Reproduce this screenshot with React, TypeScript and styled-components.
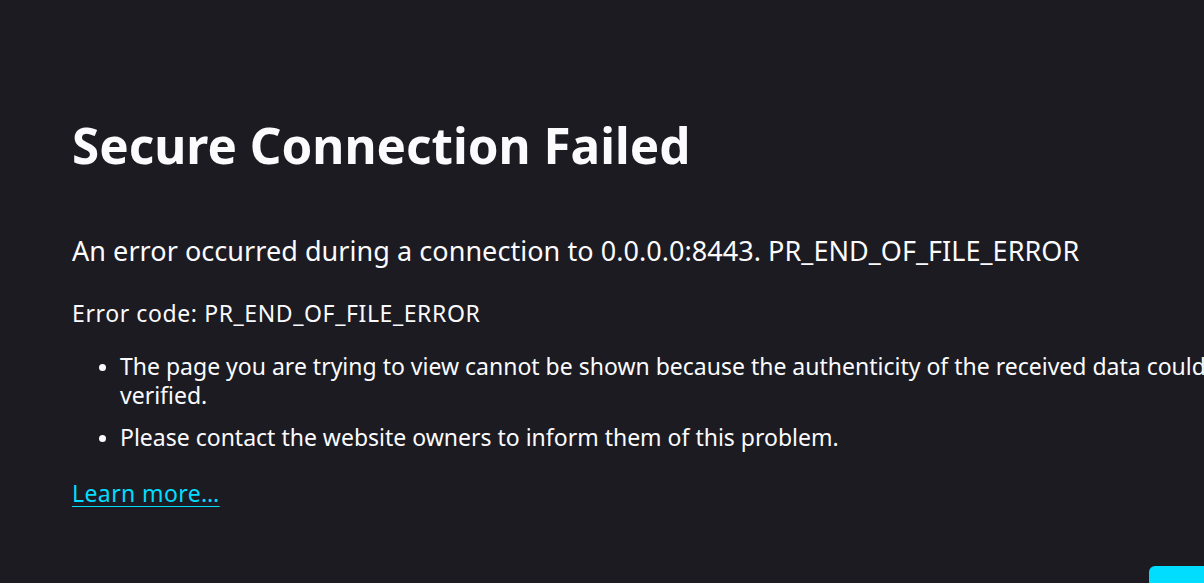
import React from "react";
import styled, { createGlobalStyle } from "styled-components";

const Global = createGlobalStyle`
  html, body { margin: 0; padding: 0; background: #1c1b22; }
  body { overflow: hidden; font-family: "Noto Sans", "Open Sans", sans-serif; color: #fbfbfe; }
`;

const Page = styled.div`
  position: relative;
  width: 1204px;
  height: 583px;
  overflow: hidden;
  background: #1c1b22;
`;

const Container = styled.main`
  width: 1250px;
  padding: 112px 0 0 72px;
  box-sizing: content-box;
`;

const Title = styled.h1`
  margin: 0;
  font-size: 49.4px;
  font-weight: 700;
  line-height: 66px;
  color: #fbfbfe;
`;

const ShortDesc = styled.p`
  margin: 53px 0 0;
  font-size: 27px;
  line-height: 40px;
  letter-spacing: 0.05px;
`;

const Code = styled.p`
  margin: 26px 0 0;
  font-size: 23px;
  line-height: 32px;
  letter-spacing: 0.6px;
`;

const List = styled.ul`
  margin: 23px 0 0;
  padding-left: 48px;
  font-size: 23px;
  line-height: 29px;
  letter-spacing: 0;
  li { margin-bottom: 13px; }
  li::marker { font-size: 20px; }
`;

const Link = styled.a`
  display: inline-block;
  margin-top: 12px;
  font-size: 23px;
  line-height: 32px;
  letter-spacing: 0.4px;
  color: #00ddff;
  text-decoration: underline;
  text-decoration-thickness: 1px;
  text-underline-offset: 4px;
`;

const CornerButton = styled.div`
  position: absolute;
  left: 1149px;
  top: 566px;
  width: 120px;
  height: 40px;
  background: #00ddff;
  border-radius: 6px;
`;

export default function App() {
  return (
    <Page>
      <Global />
      <Container>
        <Title>Secure Connection Failed</Title>
        <ShortDesc>An error occurred during a connection to 0.0.0.0:8443. PR_END_OF_FILE_ERROR</ShortDesc>
        <Code>Error code: PR_END_OF_FILE_ERROR</Code>
        <List>
          <li>The page you are trying to view cannot be shown because the authenticity of the received data could not be verified.</li>
          <li>Please contact the website owners to inform them of this problem.</li>
        </List>
        <Link href="#">Learn more…</Link>
      </Container>
      <CornerButton />
    </Page>
  );
}
